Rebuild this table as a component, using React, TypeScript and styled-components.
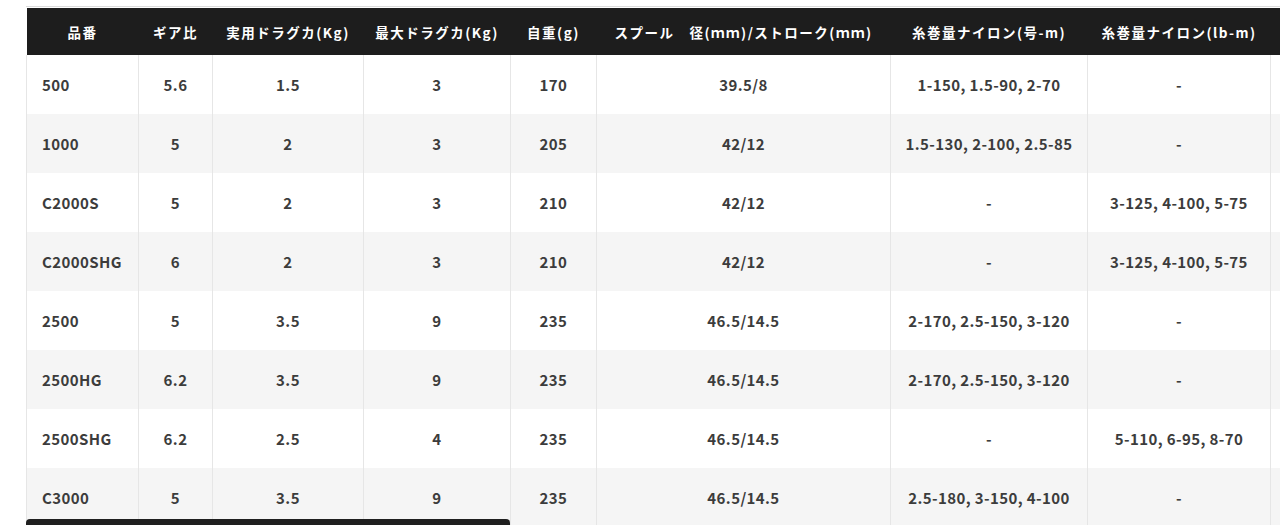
import React from 'react'
import styled, { createGlobalStyle } from 'styled-components'

/**
 * global
 */
const GlobalStyle = createGlobalStyle`
  html, body {
    margin: 0;
    padding: 0;
    background: #fff;
    overflow: hidden;
  }
  body {
    font-family: 'Noto Sans CJK JP', 'Noto Sans', sans-serif;
  }
`

/**
 * styled
 */
const Page = styled.div`
  position: relative;
  height: 525px;
  overflow: hidden;
  padding: 6px 0 0 26px;
  box-sizing: border-box;
`

const TableWrap = styled.div`
  width: 1254px;
  overflow: hidden;
  border-top: 1px solid #dcdcdc;
  padding-top: 1px;
`

const SpecTable = styled.table`
  border-collapse: collapse;
  table-layout: fixed;
  width: 1454px;
  color: #333;
`

const HeadCell = styled.th`
  height: 47px;
  padding: 0;
  background: #1d1d1d;
  color: #fff;
  font-size: 13.5px;
  font-weight: 700;
  letter-spacing: 1.5px;
  text-align: center;
  white-space: nowrap;
`

const Row = styled.tr<{ $odd: boolean }>`
  height: 59px;
  background: ${(props) => (props.$odd ? '#f5f5f5' : '#fff')};
`

const Cell = styled.td<{ $left?: boolean }>`
  padding: 0 ${(props) => (props.$left ? '15px' : '4px')};
  border-left: 1px solid #e6e6e6;
  border-right: 1px solid #e6e6e6;
  font-size: 15px;
  font-weight: 700;
  letter-spacing: 0.4px;
  color: #3c3c3c;
  text-align: ${(props) => (props.$left ? 'left' : 'center')};
  white-space: nowrap;
`

// horizontal scrollbar thumb laid over the bottom of the table
const ScrollThumb = styled.div`
  position: absolute;
  left: 26px;
  bottom: 0;
  width: 484px;
  height: 6px;
  background: #1f1f1f;
  border-radius: 4px 4px 0 0;
`

// last column is scrolled out of view, only its edge shows
const columns = [
  { label: '品番', width: 112 },
  { label: 'ギア比', width: 74 },
  { label: '実用ドラグカ(Kg)', width: 151 },
  { label: '最大ドラグカ(Kg)', width: 147 },
  { label: '自重(g)', width: 86 },
  { label: 'スプール　径(ｍｍ)/ストローク(ｍｍ)', width: 294 },
  { label: '糸巻量ナイロン(号-m)', width: 197 },
  { label: '糸巻量ナイロン(lb-m)', width: 183 },
  { label: '', width: 210 },
]

const data = [
  ['500', '5.6', '1.5', '3', '170', '39.5/8', '1-150, 1.5-90, 2-70', '-', ''],
  ['1000', '5', '2', '3', '205', '42/12', '1.5-130, 2-100, 2.5-85', '-', ''],
  ['C2000S', '5', '2', '3', '210', '42/12', '-', '3-125, 4-100, 5-75', ''],
  ['C2000SHG', '6', '2', '3', '210', '42/12', '-', '3-125, 4-100, 5-75', ''],
  ['2500', '5', '3.5', '9', '235', '46.5/14.5', '2-170, 2.5-150, 3-120', '-', ''],
  ['2500HG', '6.2', '3.5', '9', '235', '46.5/14.5', '2-170, 2.5-150, 3-120', '-', ''],
  ['2500SHG', '6.2', '2.5', '4', '235', '46.5/14.5', '-', '5-110, 6-95, 8-70', ''],
  ['C3000', '5', '3.5', '9', '235', '46.5/14.5', '2.5-180, 3-150, 4-100', '-', ''],
]

const App: React.FC = () => {
  return (
    <>
      <GlobalStyle />
      <Page>
        <TableWrap>
          <SpecTable>
            <colgroup>
              {columns.map((col, i) => (
                <col key={i} style={{ width: col.width }} />
              ))}
            </colgroup>
            <thead>
              <tr>
                {columns.map((col, i) => (
                  <HeadCell key={i}>{col.label}</HeadCell>
                ))}
              </tr>
            </thead>
            <tbody>
              {data.map((row, index) => (
                <Row key={row[0]} $odd={index % 2 === 1}>
                  {row.map((value, i) => (
                    <Cell key={i} $left={i === 0}>
                      {value}
                    </Cell>
                  ))}
                </Row>
              ))}
            </tbody>
          </SpecTable>
        </TableWrap>
        <ScrollThumb />
      </Page>
    </>
  )
}

export default App
